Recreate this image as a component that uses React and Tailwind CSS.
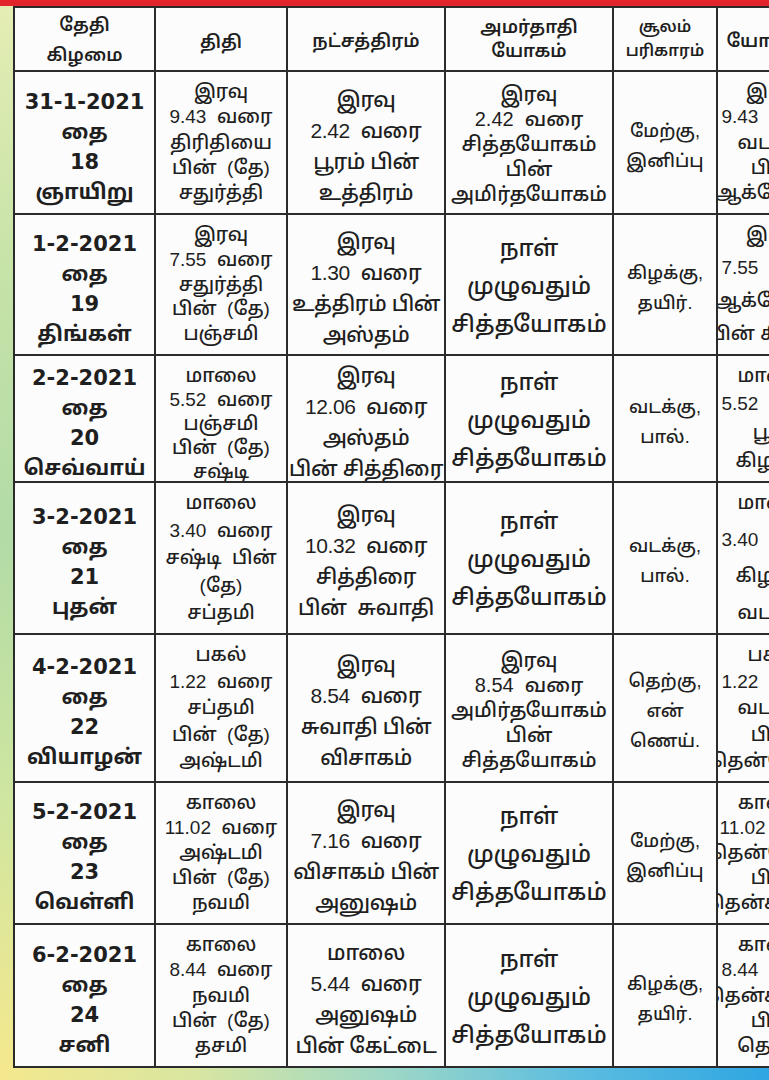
import React from "react";

const ROWS = [
  {
    h: "h-[143px]",
    date: ["31-1-2021", "தை", "18", "ஞாயிறு"],
    tithi: ["இரவு", "9.43  வரை", "திரிதியை", "பின்  (தே)", "சதுர்த்தி"],
    nak: ["இரவு", "2.42  வரை", "பூரம் பின்", "உத்திரம்"],
    yog: ["இரவு", "2.42  வரை", "சித்தயோகம்", "பின்", "அமிர்தயோகம்"],
    sool: ["மேற்கு,", "இனிப்பு"],
    last: ["இரவு", "9.43  வரை", "வடக்கு", "பின்", "ஆக்னேயம்"],
  },
  {
    h: "h-[141px]",
    date: ["1-2-2021", "தை", "19", "திங்கள்"],
    tithi: ["இரவு", "7.55  வரை", "சதுர்த்தி", "பின்  (தே)", "பஞ்சமி"],
    nak: ["இரவு", "1.30  வரை", "உத்திரம் பின்", "அஸ்தம்"],
    yog: ["நாள்", "முழுவதும்", "சித்தயோகம்"],
    sool: ["கிழக்கு,", "தயிர்."],
    last: ["இரவு", "7.55  வரை", "ஆக்னேயம்", "பின் கிழக்கு"],
  },
  {
    h: "h-[127px]",
    date: ["2-2-2021", "தை", "20", "செவ்வாய்"],
    tithi: ["மாலை", "5.52  வரை", "பஞ்சமி", "பின்  (தே)", "சஷ்டி"],
    nak: ["இரவு", "12.06  வரை", "அஸ்தம்", "பின் சித்திரை"],
    yog: ["நாள்", "முழுவதும்", "சித்தயோகம்"],
    sool: ["வடக்கு,", "பால்."],
    last: ["மாலை", "5.52  வரை", "பூமி", "கிழக்கு"],
  },
  {
    h: "h-[152px]",
    date: ["3-2-2021", "தை", "21", "புதன்"],
    tithi: ["மாலை", "3.40  வரை", "சஷ்டி  பின்", "(தே)", "சப்தமி"],
    nak: ["இரவு", "10.32  வரை", "சித்திரை", "பின்  சுவாதி"],
    yog: ["நாள்", "முழுவதும்", "சித்தயோகம்"],
    sool: ["வடக்கு,", "பால்."],
    last: ["மாலை", "3.40  வரை", "கிழக்கு", "வடக்கு"],
  },
  {
    h: "h-[148px]",
    date: ["4-2-2021", "தை", "22", "வியாழன்"],
    tithi: ["பகல்", "1.22  வரை", "சப்தமி", "பின்  (தே)", "அஷ்டமி"],
    nak: ["இரவு", "8.54  வரை", "சுவாதி பின்", "விசாகம்"],
    yog: ["இரவு", "8.54  வரை", "அமிர்தயோகம்", "பின்", "சித்தயோகம்"],
    sool: ["தெற்கு,", "என்", "ணெய்."],
    last: ["பகல்", "1.22  வரை", "வடக்கு", "பின்", "தென்மேற்கு"],
  },
  {
    h: "h-[142px]",
    date: ["5-2-2021", "தை", "23", "வெள்ளி"],
    tithi: ["காலை", "11.02  வரை", "அஷ்டமி", "பின்  (தே)", "நவமி"],
    nak: ["இரவு", "7.16  வரை", "விசாகம் பின்", "அனுஷம்"],
    yog: ["நாள்", "முழுவதும்", "சித்தயோகம்"],
    sool: ["மேற்கு,", "இனிப்பு"],
    last: ["காலை", "11.02 வரை", "தென்மேற்கு", "பின்", "தென்கிழக்கு"],
  },
  {
    h: "h-[143px]",
    date: ["6-2-2021", "தை", "24", "சனி"],
    tithi: ["காலை", "8.44  வரை", "நவமி", "பின்  (தே)", "தசமி"],
    nak: ["மாலை", "5.44  வரை", "அனுஷம்", "பின் கேட்டை"],
    yog: ["நாள்", "முழுவதும்", "சித்தயோகம்"],
    sool: ["கிழக்கு,", "தயிர்."],
    last: ["காலை", "8.44  வரை", "தென்கிழக்கு", "பின்", "தெற்கு"],
  },
];

const cellBase =
  "shrink-0 h-full flex flex-col items-center border-r-2 border-[#2b2b2b] bg-[#fcfcfc] overflow-hidden text-center whitespace-pre";

function Lines({ lines }) {
  return lines.map((l, i) => <div key={i}>{l}</div>);
}

export default function App() {
  return (
    <div className="w-[769px] h-[1080px] overflow-hidden flex flex-col bg-white text-[#1f1f1f] font-['Liberation_Sans','Noto_Sans_Tamil','Noto_Sans',sans-serif]">
      <div className="h-[6px] shrink-0 bg-[#e2252b]" />
      <div className="flex flex-1 min-h-0">
        <div className="w-[13px] shrink-0 bg-[linear-gradient(180deg,#e4edb4_0%,#c6e3a8_25%,#b2dba6_50%,#cfe6a0_75%,#f4e88e_100%)]" />
        <div className="flex-1 min-w-0 overflow-hidden">
          <div className="w-[900px] border-t-2 border-l-2 border-[#2b2b2b]">
            {/* header */}
            <div className="flex h-[64px] border-b-2 border-[#2b2b2b] text-[18px] font-semibold">
              <div className={`${cellBase} w-[141px] justify-center leading-[30px] pt-[2px]`}>
                <Lines lines={["தேதி", "கிழமை"]} />
              </div>
              <div className={`${cellBase} w-[132px] justify-center pt-[6px]`}>
                <div>திதி</div>
              </div>
              <div className={`${cellBase} w-[158px] justify-center pt-[4px]`}>
                <div>நட்சத்திரம்</div>
              </div>
              <div className={`${cellBase} w-[168px] justify-center leading-[24px]`}>
                <Lines lines={["அமர்தாதி", "யோகம்"]} />
              </div>
              <div className={`${cellBase} w-[104px] justify-center leading-[24px] text-[16px]`}>
                <Lines lines={["சூலம்", "பரிகாரம்"]} />
              </div>
              <div className={`${cellBase} w-[112px] justify-center pt-[4px]`}>
                <div>யோகினி</div>
              </div>
            </div>
            {ROWS.map((r, i) => (
              <div key={i} className={`flex ${r.h} border-b-2 border-[#2b2b2b]`}>
                <div className={`${cellBase} w-[141px] justify-center pt-[8px] leading-[30px] font-bold text-[21px] font-['DejaVu_Sans','Noto_Sans_Tamil',sans-serif]`}>
                  <Lines lines={r.date} />
                </div>
                <div className={`${cellBase} w-[132px] justify-between py-[8px] leading-[24px] text-[19px] font-medium`}>
                  <Lines lines={r.tithi} />
                </div>
                <div className={`${cellBase} w-[158px] justify-center pt-[6px] leading-[31px] text-[21px] tracking-[-0.4px] font-medium`}>
                  <Lines lines={r.nak} />
                </div>
                {r.yog.length === 3 ? (
                  <div className={`${cellBase} w-[168px] justify-center pt-[2px] leading-[38px] text-[23px] font-medium`}>
                    <Lines lines={r.yog} />
                  </div>
                ) : (
                  <div className={`${cellBase} w-[168px] justify-center pt-[4px] leading-[25px] text-[20px] font-medium`}>
                    <Lines lines={r.yog} />
                  </div>
                )}
                <div className={`${cellBase} w-[104px] justify-center pt-[6px] leading-[30px] text-[18px] font-medium`}>
                  <Lines lines={r.sool} />
                </div>
                <div className={`${cellBase} w-[112px] justify-between py-[8px] leading-[24px] text-[19px] font-medium`}>
                  <Lines lines={r.last} />
                </div>
              </div>
            ))}
          </div>
        </div>
      </div>
      <div className="h-[12px] shrink-0 bg-[linear-gradient(90deg,#f4e88e_0%,#d9e6a0_25%,#9fd8c6_50%,#5cbde0_75%,#2fa6e2_100%)]" />
    </div>
  );
}
